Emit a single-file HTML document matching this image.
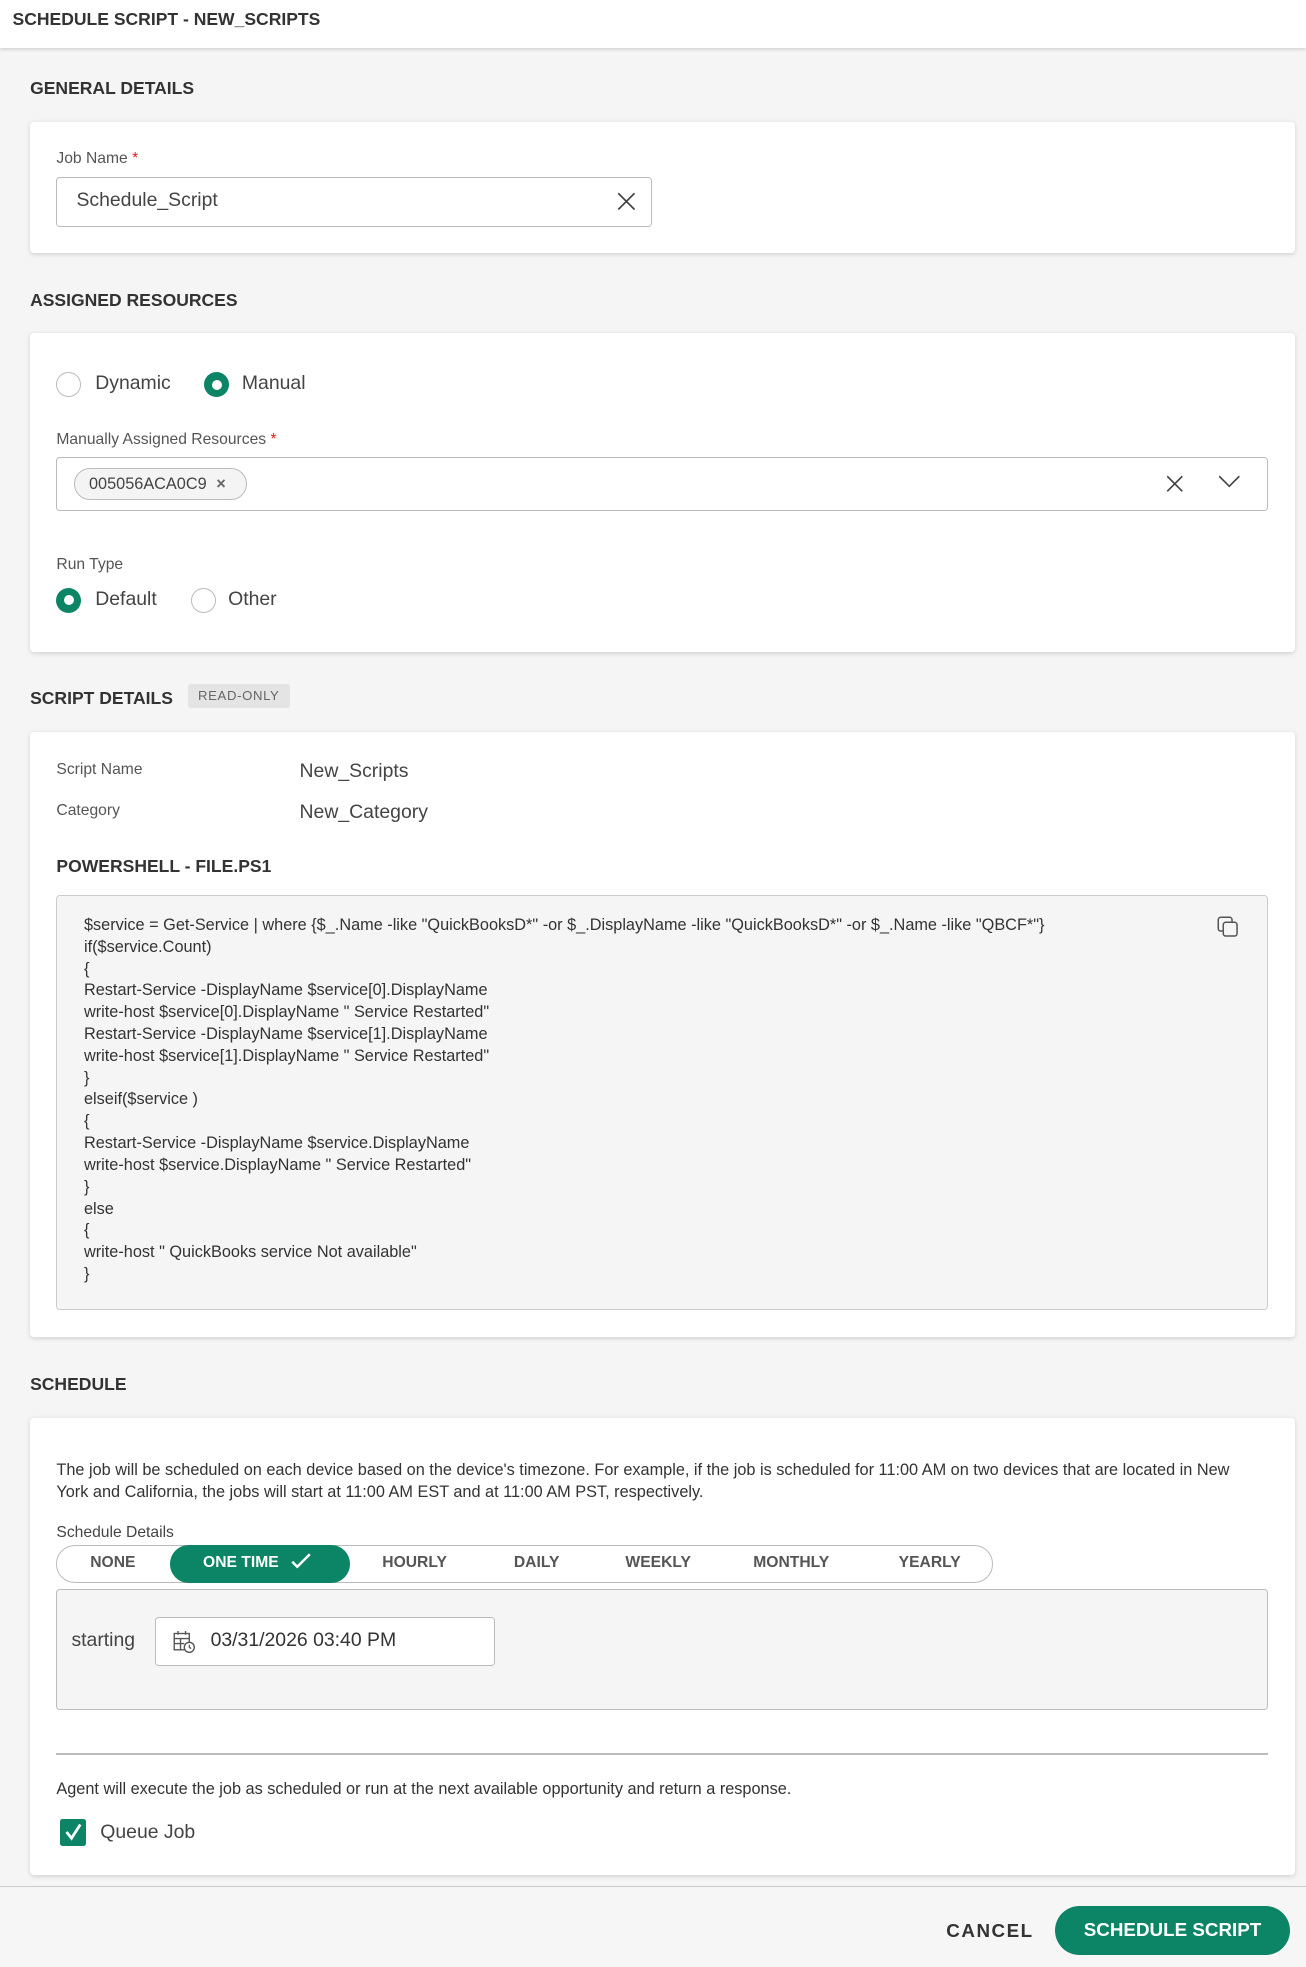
<!DOCTYPE html>
<html><head><meta charset="utf-8">
<style>
html{zoom:1.25336}
*{box-sizing:border-box;margin:0;padding:0}
body{width:1042px;height:1569px;background:#f5f5f5;font-family:"Liberation Sans",sans-serif;color:#333;position:relative;overflow:hidden}
.a{position:absolute;white-space:nowrap}
.hdr{left:0;top:0;width:1042px;height:38px;background:#fff;box-shadow:0 1px 3px rgba(0,0,0,.18)}
.h{font-weight:bold;font-size:14px;color:#333;line-height:16px}
.card{position:absolute;left:24px;width:1009px;background:#fff;border-radius:3px;box-shadow:0 1px 4px rgba(0,0,0,.15)}
.lbl{font-size:12.5px;color:#555;line-height:14px}
.req{color:#d22}
.inp{border:1px solid #bbb;border-radius:3px;background:#fff}
.rad{width:20px;height:20px;border-radius:50%;border:1.5px solid #bbb;background:#fff}
.rad.on{border:none;background:#0b8565}
.rad.on:after{content:"";position:absolute;left:6px;top:6px;width:8px;height:8px;border-radius:50%;background:#fff}
.t16{font-size:15.5px;color:#444;line-height:18px}
.code{font-size:13px;line-height:17.4px;color:#333;white-space:pre}
.tab{font-size:12.5px;font-weight:bold;color:#555;top:1240px;line-height:14px}
</style></head><body>
<div class="a hdr"></div>
<div class="a h" style="left:10px;top:7px">SCHEDULE SCRIPT - NEW_SCRIPTS</div>

<div class="a h" style="left:24px;top:62px">GENERAL DETAILS</div>
<div class="card" style="top:97px;height:105px"></div>
<div class="a lbl" style="left:45px;top:120px">Job Name <span class="req">*</span></div>
<div class="a inp" style="left:45px;top:141px;width:475px;height:40px"></div>
<div class="a t16" style="left:61px;top:151px">Schedule_Script</div>
<svg class="a" style="left:492px;top:153px" width="15" height="15"><path d="M1 1L14 14M14 1L1 14" stroke="#444" stroke-width="1.4"/></svg>

<div class="a h" style="left:24px;top:231px">ASSIGNED RESOURCES</div>
<div class="card" style="top:266px;height:254px"></div>
<div class="a rad" style="left:45px;top:297px"></div>
<div class="a t16" style="left:76px;top:297px">Dynamic</div>
<div class="a rad on" style="left:163px;top:297px"></div>
<div class="a t16" style="left:193px;top:297px">Manual</div>
<div class="a lbl" style="left:45px;top:344px">Manually Assigned Resources <span class="req">*</span></div>
<div class="a inp" style="left:45px;top:365px;width:967px;height:43px"></div>
<div class="a" style="left:59px;top:373px;width:138px;height:26px;border:1px solid #bbb;border-radius:13px;background:#f4f4f4"></div>
<div class="a" style="left:71px;top:378px;font-size:13px;color:#444;line-height:16px">005056ACA0C9 <span style="margin-left:4px;font-weight:bold;color:#666">×</span></div>
<svg class="a" style="left:930px;top:379px" width="14" height="14"><path d="M1 1L13 13M13 1L1 13" stroke="#444" stroke-width="1.3"/></svg>
<svg class="a" style="left:972px;top:379px" width="18" height="11"><path d="M1 1L9 9L17 1" fill="none" stroke="#444" stroke-width="1.3"/></svg>
<div class="a lbl" style="left:45px;top:444px">Run Type</div>
<div class="a rad on" style="left:45px;top:469px"></div>
<div class="a t16" style="left:76px;top:469px">Default</div>
<div class="a rad" style="left:152px;top:469px"></div>
<div class="a t16" style="left:182px;top:469px">Other</div>

<div class="a h" style="left:24px;top:549px">SCRIPT DETAILS</div>
<div class="a" style="left:150px;top:546px;width:81px;height:19px;background:#e4e4e4;border-radius:2px;font-size:10.5px;color:#666;text-align:center;line-height:19px;letter-spacing:.5px">READ-ONLY</div>
<div class="card" style="top:584px;height:483px"></div>
<div class="a lbl" style="left:45px;top:607px">Script Name</div>
<div class="a t16" style="left:239px;top:606px">New_Scripts</div>
<div class="a lbl" style="left:45px;top:640px">Category</div>
<div class="a t16" style="left:239px;top:639px">New_Category</div>
<div class="a h" style="left:45px;top:683px">POWERSHELL - FILE.PS1</div>
<div class="a" style="left:45px;top:714px;width:967px;height:331px;background:#f5f5f5;border:1px solid #ccc;border-radius:3px"></div>
<div class="a code" style="left:67px;top:730px">$service = Get-Service | where {$_.Name -like "QuickBooksD*" -or $_.DisplayName -like "QuickBooksD*" -or $_.Name -like "QBCF*"}
if($service.Count)
{
Restart-Service -DisplayName $service[0].DisplayName
write-host $service[0].DisplayName " Service Restarted"
Restart-Service -DisplayName $service[1].DisplayName
write-host $service[1].DisplayName " Service Restarted"
}
elseif($service )
{
Restart-Service -DisplayName $service.DisplayName
write-host $service.DisplayName " Service Restarted"
}
else
{
write-host " QuickBooks service Not available"
}</div>
<svg class="a" style="left:971px;top:731px" width="18" height="18"><rect x="1" y="1" width="11" height="11" rx="2" fill="none" stroke="#555" stroke-width="1.2"/><rect x="5" y="5" width="11" height="11" rx="2" fill="#f5f5f5" stroke="#555" stroke-width="1.2"/></svg>

<div class="a h" style="left:24px;top:1096px">SCHEDULE</div>
<div class="card" style="top:1131px;height:365px"></div>
<div class="a" style="left:45px;top:1164px;font-size:13px;line-height:18px;color:#333;white-space:normal;width:960px">The job will be scheduled on each device based on the device's timezone. For example, if the job is scheduled for 11:00 AM on two devices that are located in New York and California, the jobs will start at 11:00 AM EST and at 11:00 AM PST, respectively.</div>
<div class="a lbl" style="left:45px;top:1216px;color:#444">Schedule Details</div>
<div class="a" style="left:45px;top:1233px;width:747px;height:30px;border:1px solid #bbb;border-radius:15px;background:#fff"></div>
<div class="a" style="left:136px;top:1233px;width:143px;height:30px;border-radius:15px;background:#0b8565"></div>
<div class="a tab" style="left:72px">NONE</div>
<div class="a tab" style="left:162px;color:#fff">ONE TIME</div>
<svg class="a" style="left:232px;top:1239px" width="16" height="13"><path d="M1 7L5 11L15 1" fill="none" stroke="#fff" stroke-width="2"/></svg>
<div class="a tab" style="left:305px">HOURLY</div>
<div class="a tab" style="left:410px">DAILY</div>
<div class="a tab" style="left:499px">WEEKLY</div>
<div class="a tab" style="left:601px">MONTHLY</div>
<div class="a tab" style="left:717px">YEARLY</div>
<div class="a" style="left:45px;top:1268px;width:967px;height:96px;background:#f5f5f5;border:1px solid #bbb;border-radius:3px"></div>
<div class="a t16" style="left:57px;top:1300px;color:#444">starting</div>
<div class="a inp" style="left:124px;top:1290px;width:271px;height:39px"></div>
<svg class="a" style="left:138px;top:1301px" width="18" height="18"><rect x="1" y="2" width="12" height="13" fill="none" stroke="#555" stroke-width="1.1"/><path d="M1 6H13M4 0V3M10 0V3M1 10H9M6 6V15" stroke="#555" stroke-width="1.1"/><circle cx="13" cy="13" r="4" fill="#fff" stroke="#555" stroke-width="1.1"/><path d="M13 11V13L14.5 14" stroke="#555" fill="none"/></svg>
<div class="a t16" style="left:168px;top:1300px;color:#333">03/31/2026 03:40 PM</div>
<div class="a" style="left:45px;top:1399px;width:967px;height:1px;background:#bbb"></div>
<div class="a" style="left:45px;top:1419px;font-size:13px;color:#333;line-height:16px">Agent will execute the job as scheduled or run at the next available opportunity and return a response.</div>
<div class="a" style="left:48px;top:1451px;width:21px;height:22px;background:#0b8565;border-radius:2px"></div>
<svg class="a" style="left:51px;top:1454px" width="15" height="16"><path d="M2 8L6 13L13 2" fill="none" stroke="#fff" stroke-width="2.2"/></svg>
<div class="a t16" style="left:80px;top:1453px">Queue Job</div>

<div class="a" style="left:0;top:1505px;width:1042px;height:64px;background:#f6f6f6;border-top:1px solid #ccc"></div>
<div class="a" style="left:755px;top:1532px;font-size:15px;font-weight:bold;color:#333;letter-spacing:1.2px">CANCEL</div>
<div class="a" style="left:842px;top:1521px;width:187px;height:39px;background:#0b8565;border-radius:20px;color:#fff;font-size:15px;font-weight:bold;text-align:center;line-height:39px">SCHEDULE SCRIPT</div>
</body></html>
